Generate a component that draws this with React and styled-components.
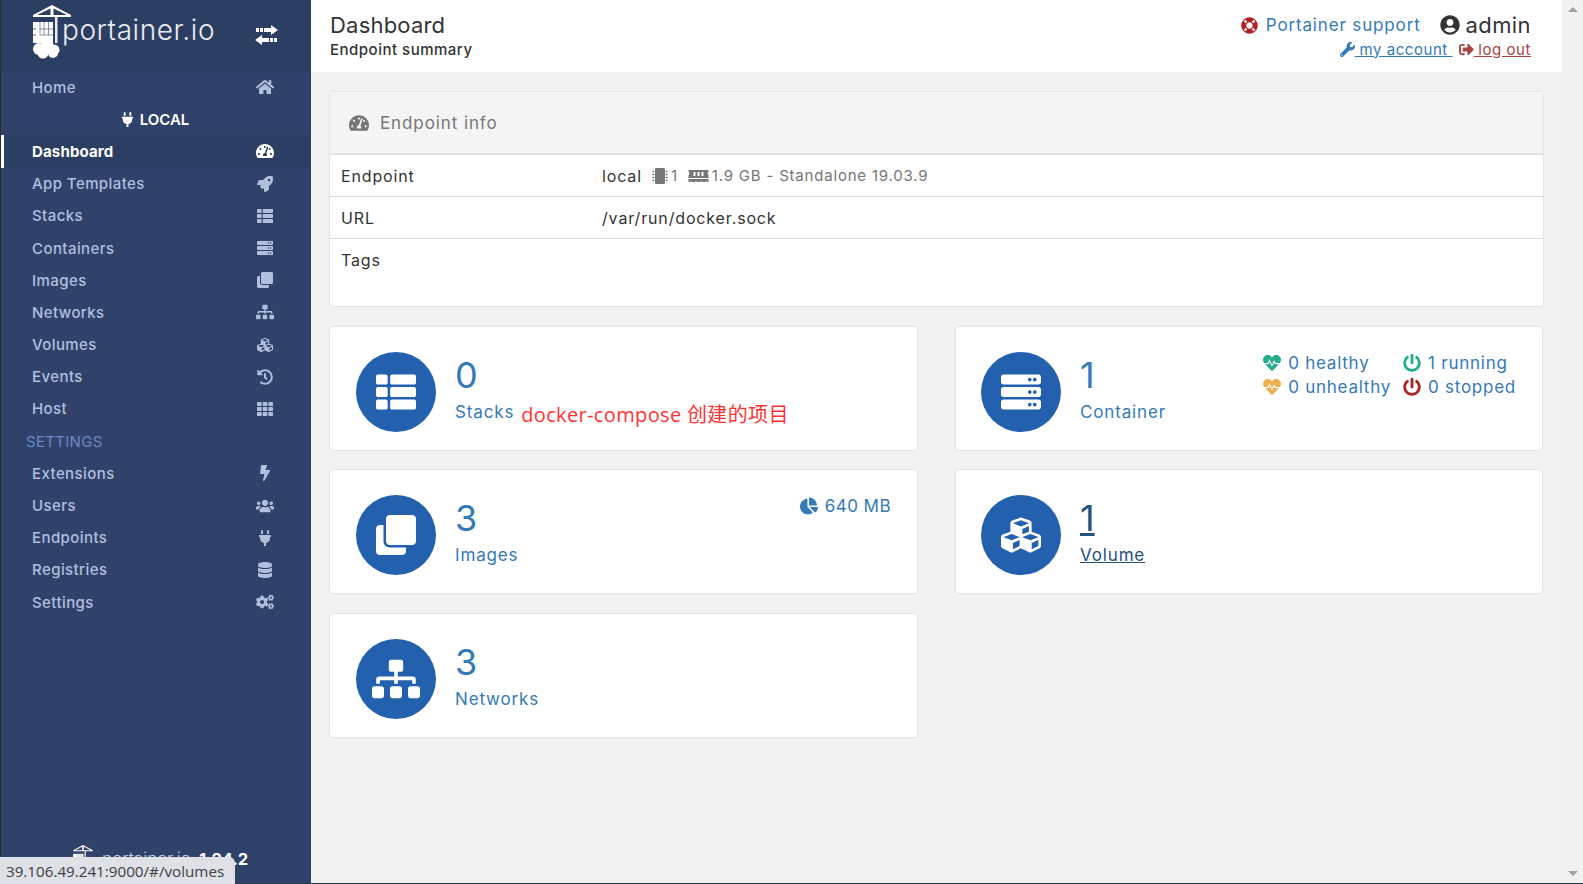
import React from 'react';
import styled, { createGlobalStyle } from 'styled-components';
import {
  FaHome, FaPlug, FaTachometerAlt, FaRocket, FaThList, FaServer, FaClone, FaSitemap, FaCubes,
  FaHistory, FaTh, FaBolt, FaUsers, FaDatabase, FaCogs, FaLifeRing, FaUserCircle,
  FaWrench, FaSignOutAlt, FaMicrochip, FaMemory, FaChartPie, FaHeartbeat, FaPowerOff,
} from 'react-icons/fa';

const GlobalStyle = createGlobalStyle`
  html, body {
    margin: 0;
    height: 100%;
    overflow: hidden;
    background: #f2f2f2;
  }
  body {
    font-family: Inter, 'Open Sans', sans-serif;
    color: #333;
  }
`;

const Page = styled.div`
  display: flex;
  height: 884px;
  box-sizing: border-box;
  border-bottom: 1px solid #2b3a4a;
  overflow: hidden;
`;

const Sidebar = styled.aside`
  display: flex;
  flex-direction: column;
  width: 311px;
  flex-shrink: 0;
  box-sizing: border-box;
  border-left: 1px solid #2b2b2b;
  background: #30426a;
`;

const Brand = styled.div`
  display: flex;
  align-items: flex-start;
  justify-content: space-between;
  height: 72px;
  box-sizing: border-box;
  padding: 5px 33px 0 31px;
  background: #2d3e63;
  color: #fff;
`;

const BrandLogo = styled.div`
  display: flex;
  align-items: flex-start;
`;

const BrandText = styled.span`
  margin: 11px 0 0 -10px;
  font-size: 28px;
  line-height: 28px;
  font-weight: 300;
  letter-spacing: 0.55px;
  color: #e9ecf2;
`;

const SwitchIcon = styled.svg`
  width: 23px;
  height: 20px;
  margin-top: 20px;
`;

const NavList = styled.nav`
  display: flex;
  flex-direction: column;
  margin-top: -1px;
`;

const NavRow = styled.a`
  display: flex;
  align-items: center;
  justify-content: space-between;
  height: 32.2px;
  box-sizing: border-box;
  padding: 0 37px 0 31px;
  font-size: 15px;
  font-weight: ${(p) => (p.$active ? 700 : 500)};
  letter-spacing: ${(p) => (p.$active ? '0.15px' : '0.42px')};
  color: ${(p) => (p.$active ? '#fff' : '#b1bfdf')};
  background: ${(p) => (p.$active ? '#2d3e63' : 'transparent')};
  box-shadow: ${(p) => (p.$active ? 'inset 3px 0 0 #fff' : 'none')};

  svg {
    width: 18px;
    height: 16px;
  }
`;

const EndpointName = styled.div`
  display: flex;
  align-items: center;
  justify-content: center;
  gap: 6px;
  height: 32.2px;
  font-size: 15px;
  font-weight: 600;
  color: #fff;
  padding-right: 2px;

  svg {
    width: 13px;
    height: 15px;
  }
`;

const SectionTitle = styled.div`
  display: flex;
  align-items: center;
  height: 32.2px;
  padding-left: 25px;
  font-size: 15px;
  font-weight: 400;
  letter-spacing: 0.3px;
  color: #6d88c6;
`;

const SidebarFooter = styled.div`
  display: flex;
  align-items: center;
  gap: 6px;
  margin-top: auto;
  margin-bottom: 9px;
  height: 30px;
  padding-left: 69px;
  color: #fff;
`;

const FooterBrand = styled.span`
  font-size: 17px;
  font-weight: 300;
  color: #c9d0df;
`;

const FooterVersion = styled.span`
  margin-left: 2px;
  font-size: 16.5px;
  font-weight: 700;
`;

const Main = styled.main`
  flex: 1;
  min-width: 0;
`;

const Header = styled.header`
  display: flex;
  justify-content: space-between;
  height: 72px;
  box-sizing: border-box;
  padding: 12px 31px 0 19px;
  background: #fff;
`;

const HeaderTitle = styled.div`
  font-size: 22px;
  line-height: 26px;
  font-weight: 400;
  letter-spacing: 0.2px;
  color: #333;
`;

const HeaderSub = styled.div`
  margin-top: 1px;
  font-size: 15px;
  line-height: 22px;
  font-weight: 500;
  letter-spacing: 0.5px;
`;

const UserArea = styled.div`
  display: flex;
  flex-direction: column;
  align-items: flex-end;
`;

const UserTop = styled.div`
  display: flex;
  align-items: center;
  height: 26px;
`;

const SupportLink = styled.a`
  display: flex;
  align-items: center;
  gap: 8px;
  margin-right: 19px;
  font-size: 17px;
  letter-spacing: 0.85px;
  color: #337ab7;

  svg {
    width: 17px;
    height: 17px;
    color: #b52025;
  }
`;

const UserName = styled.span`
  display: flex;
  align-items: center;
  gap: 6px;
  font-size: 22px;
  letter-spacing: 0.4px;
  color: #333;

  svg {
    width: 20px;
    height: 20px;
  }
`;

const UserLinks = styled.div`
  display: flex;
  gap: 6px;
  margin-top: -1px;
  height: 24px;
  align-items: center;
`;

const UserLink = styled.a`
  display: inline-flex;
  align-items: center;
  font-size: 15px;
  letter-spacing: 0.55px;
  white-space: pre;
  color: ${(p) => p.$color};

  svg {
    width: 15px;
    height: 15px;
  }
`;

const UserLinkText = styled.span`
  text-decoration: underline;
`;

const Content = styled.div`
  padding: 20px 19px 0;
`;

const InfoCard = styled.section`
  height: 214px;
  background: #fff;
  border-radius: 2px;
  box-shadow: 0 0 2px rgba(0, 0, 0, 0.18);
`;

const InfoHeader = styled.div`
  display: flex;
  align-items: center;
  gap: 11px;
  height: 63px;
  box-sizing: border-box;
  padding-left: 19px;
  background: #f5f5f5;
  border-bottom: 2px solid #e4e4e4;
  font-size: 17px;
  letter-spacing: 0.9px;
  color: #767676;

  svg {
    width: 20px;
    height: 18px;
  }
`;

const InfoRow = styled.div`
  display: grid;
  grid-template-columns: 261px 1fr;
  align-items: center;
  height: 42px;
  box-sizing: border-box;
  padding: 0 0 0 11px;
  border-bottom: ${(p) => (p.$last ? 'none' : '1px solid #ddd')};
  font-size: 16px;
  letter-spacing: 0.85px;
`;

const InfoValue = styled.div`
  display: flex;
  align-items: center;
  color: #333;
`;

const Muted = styled.span`
  display: inline-flex;
  align-items: center;
  gap: 3px;
  margin-left: ${(p) => p.$gap}px;
  font-size: 15px;
  letter-spacing: 0.8px;
  color: #767676;

  svg {
    width: ${(p) => p.$icon}px;
    height: 16px;
  }
`;

const CardGrid = styled.div`
  display: grid;
  grid-template-columns: 587px 586px;
  grid-auto-rows: 123px;
  column-gap: 39px;
  row-gap: 20.4px;
  margin-top: 21px;
`;

const StatCard = styled.a`
  display: flex;
  align-items: flex-start;
  justify-content: space-between;
  box-sizing: border-box;
  padding: 25px 26px 0 26px;
  background: #fff;
  border-radius: 2px;
  box-shadow: 0 0 2px rgba(0, 0, 0, 0.18);
  color: ${(p) => (p.$hover ? '#23527c' : '#337ab7')};

  &:nth-child(even) {
    padding-left: 25px;
  }
`;

const StatMain = styled.div`
  display: flex;
  gap: 19px;
`;

const Circle = styled.div`
  display: flex;
  align-items: center;
  justify-content: center;
  width: 80px;
  height: 80px;
  border-radius: 50%;
  background: #2360ae;
  color: #fff;

  svg {
    width: ${(p) => p.$icon || 40}px;
    height: ${(p) => p.$icon || 40}px;
  }
`;

const StatText = styled.div`
  display: flex;
  flex-direction: column;
  text-decoration: ${(p) => (p.$hover ? 'underline' : 'none')};
`;

const StatNumber = styled.div`
  height: 48px;
  font-size: 36px;
  line-height: 46px;
  font-weight: 400;
`;

const StatLabelRow = styled.div`
  display: flex;
  align-items: flex-start;
  gap: 7px;
`;

const StatLabel = styled.span`
  font-size: 17px;
  line-height: 24px;
  letter-spacing: 0.85px;
`;

const Annotation = styled.span`
  margin-top: 3px;
  font-family: 'Open Sans', 'Noto Sans CJK SC', sans-serif;
  font-size: 20px;
  line-height: 24px;
  letter-spacing: 0.35px;
  color: #ff3333;
`;

const SizeTag = styled.div`
  display: flex;
  align-items: center;
  gap: 7px;
  margin-top: 1px;
  font-size: 17px;
  letter-spacing: 0.45px;

  svg {
    width: 18px;
    height: 18px;
  }
`;

const StatusGrid = styled.div`
  display: grid;
  grid-template-columns: auto auto;
  column-gap: 12px;
  row-gap: 0;
  margin: -1px 0 0 0;
`;

const Status = styled.div`
  display: flex;
  align-items: center;
  gap: 7px;
  height: 24px;
  font-size: 17px;
  letter-spacing: 0.75px;

  svg {
    width: 18px;
    height: 18px;
    color: ${(p) => p.$color};
  }
`;

const StatusBubble = styled.div`
  position: fixed;
  left: 0;
  bottom: 0;
  height: 27px;
  padding: 0 11px 0 6px;
  display: flex;
  align-items: center;
  background: #dee1e6;
  border-top-right-radius: 6px;
  font-family: 'Open Sans', sans-serif;
  font-size: 15.2px;
  color: #3c4043;
`;

const ScrollTrack = styled.div`
  display: flex;
  flex-direction: column;
  align-items: center;
  justify-content: space-between;
  width: 21px;
  flex-shrink: 0;
  box-sizing: border-box;
  padding: 7px 0;
  background: #f1f1f1;
`;

const ScrollArrow = styled.span`
  width: 0;
  height: 0;
  border-left: 5px solid transparent;
  border-right: 5px solid transparent;
  border-bottom: ${(p) => (p.$down ? 'none' : '5px solid #a3a3a3')};
  border-top: ${(p) => (p.$down ? '5px solid #a3a3a3' : 'none')};
`;

const CraneLogo = ({ small }) => (
  <svg
    width={small ? 26 : 40}
    height={small ? 28 : 54}
    viewBox="0 0 40 54"
    fill="#fff"
    style={{ flexShrink: 0 }}
  >
    <path d="M20 0 L39 10 V12 H1 V10 Z M5 10 H18.5 V3.5 Z M21.5 10 H35 L21.5 3.5 Z" fillRule="evenodd" />
    <rect x="23" y="12" width="2.5" height="26" opacity="0.9" />
    <rect x="1" y="17" width="20" height="21" />
    <path d="M8 24 H21 M8 30 H21 M12 17 V30 M16.5 17 V30 M8 17 V30" stroke="#2d3e63" strokeWidth="0.8" opacity="0.7" />
    <path d="M1 24 H4 M1 30 H4" stroke="#2d3e63" strokeWidth="0.8" />
    {!small && (
      <>
        <circle cx="7" cy="44" r="6" />
        <circle cx="15" cy="41" r="6.5" />
        <circle cx="22" cy="45" r="5.5" />
        <circle cx="11" cy="48" r="5.5" />
        <circle cx="21" cy="48" r="5" />
      </>
    )}
  </svg>
);

const navTop = [
  { label: 'Dashboard', icon: FaTachometerAlt, active: true },
  { label: 'App Templates', icon: FaRocket },
  { label: 'Stacks', icon: FaThList },
  { label: 'Containers', icon: FaServer },
  { label: 'Images', icon: FaClone },
  { label: 'Networks', icon: FaSitemap },
  { label: 'Volumes', icon: FaCubes },
  { label: 'Events', icon: FaHistory },
  { label: 'Host', icon: FaTh },
];

const navSettings = [
  { label: 'Extensions', icon: FaBolt },
  { label: 'Users', icon: FaUsers },
  { label: 'Endpoints', icon: FaPlug },
  { label: 'Registries', icon: FaDatabase },
  { label: 'Settings', icon: FaCogs },
];

const NavItem = ({ item }) => {
  const Icon = item.icon;
  return (
    <NavRow $active={item.active}>
      {item.label}
      <Icon />
    </NavRow>
  );
};

const App = () => (
  <>
    <GlobalStyle />
    <Page>
      <Sidebar>
        <Brand>
          <BrandLogo>
            <CraneLogo />
            <BrandText>portainer.io</BrandText>
          </BrandLogo>
          <SwitchIcon viewBox="0 0 23 20" fill="#fff">
            <path d="M23 5 L16 0 V3 H9 V7 H16 V10 Z" />
            <rect x="5" y="3" width="3" height="4" />
            <rect x="1" y="3" width="3" height="4" />
            <path d="M0 15 L7 10 V13 H14 V17 H7 V20 Z" />
            <rect x="15" y="13" width="3" height="4" />
            <rect x="19" y="13" width="3" height="4" />
          </SwitchIcon>
        </Brand>
        <NavList>
          <NavItem item={{ label: 'Home', icon: FaHome }} />
          <EndpointName>
            <FaPlug />
            LOCAL
          </EndpointName>
          {navTop.map((item) => (
            <NavItem key={item.label} item={item} />
          ))}
          <SectionTitle>SETTINGS</SectionTitle>
          {navSettings.map((item) => (
            <NavItem key={item.label} item={item} />
          ))}
        </NavList>
        <SidebarFooter>
          <CraneLogo small />
          <FooterBrand>portainer.io</FooterBrand>
          <FooterVersion>1.24.2</FooterVersion>
        </SidebarFooter>
      </Sidebar>

      <Main>
        <Header>
          <div>
            <HeaderTitle>Dashboard</HeaderTitle>
            <HeaderSub>Endpoint summary</HeaderSub>
          </div>
          <UserArea>
            <UserTop>
              <SupportLink>
                <FaLifeRing />
                Portainer support
              </SupportLink>
              <UserName>
                <FaUserCircle />
                admin
              </UserName>
            </UserTop>
            <UserLinks>
              <UserLink $color="#337ab7">
                <FaWrench />
                <UserLinkText> my account </UserLinkText>
              </UserLink>
              <UserLink $color="#a94442">
                <FaSignOutAlt />
                <UserLinkText> log out</UserLinkText>
              </UserLink>
            </UserLinks>
          </UserArea>
        </Header>

        <Content>
          <InfoCard>
            <InfoHeader>
              <FaTachometerAlt />
              Endpoint info
            </InfoHeader>
            <InfoRow>
              <span>Endpoint</span>
              <InfoValue>
                local
                <Muted $gap={10} $icon={16}>
                  <FaMicrochip />1
                </Muted>
                <Muted $gap={10} $icon={21}>
                  <FaMemory />1.9 GB - Standalone 19.03.9
                </Muted>
              </InfoValue>
            </InfoRow>
            <InfoRow>
              <span>URL</span>
              <InfoValue>/var/run/docker.sock</InfoValue>
            </InfoRow>
            <InfoRow $last>
              <span>Tags</span>
            </InfoRow>
          </InfoCard>

          <CardGrid>
            <StatCard>
              <StatMain>
                <Circle><FaThList /></Circle>
                <StatText>
                  <StatNumber>0</StatNumber>
                  <StatLabelRow>
                    <StatLabel>Stacks</StatLabel>
                    <Annotation>docker-compose 创建的项目</Annotation>
                  </StatLabelRow>
                </StatText>
              </StatMain>
            </StatCard>

            <StatCard>
              <StatMain>
                <Circle><FaServer /></Circle>
                <StatText>
                  <StatNumber>1</StatNumber>
                  <StatLabel>Container</StatLabel>
                </StatText>
              </StatMain>
              <StatusGrid>
                <Status $color="#23ae89"><FaHeartbeat />0 healthy</Status>
                <Status $color="#23ae89"><FaPowerOff />1 running</Status>
                <Status $color="#f0ad4e"><FaHeartbeat />0 unhealthy</Status>
                <Status $color="#ae2323"><FaPowerOff />0 stopped</Status>
              </StatusGrid>
            </StatCard>

            <StatCard>
              <StatMain>
                <Circle><FaClone /></Circle>
                <StatText>
                  <StatNumber>3</StatNumber>
                  <StatLabel>Images</StatLabel>
                </StatText>
              </StatMain>
              <SizeTag><FaChartPie />640 MB</SizeTag>
            </StatCard>

            <StatCard $hover>
              <StatMain>
                <Circle><FaCubes /></Circle>
                <StatText $hover>
                  <StatNumber>1</StatNumber>
                  <StatLabel>Volume</StatLabel>
                </StatText>
              </StatMain>
            </StatCard>

            <StatCard>
              <StatMain>
                <Circle $icon={48}><FaSitemap /></Circle>
                <StatText>
                  <StatNumber>3</StatNumber>
                  <StatLabel>Networks</StatLabel>
                </StatText>
              </StatMain>
            </StatCard>
          </CardGrid>
        </Content>
      </Main>

      <ScrollTrack>
        <ScrollArrow />
        <ScrollArrow $down />
      </ScrollTrack>
    </Page>
    <StatusBubble>39.106.49.241:9000/#/volumes</StatusBubble>
  </>
);

export default App;
